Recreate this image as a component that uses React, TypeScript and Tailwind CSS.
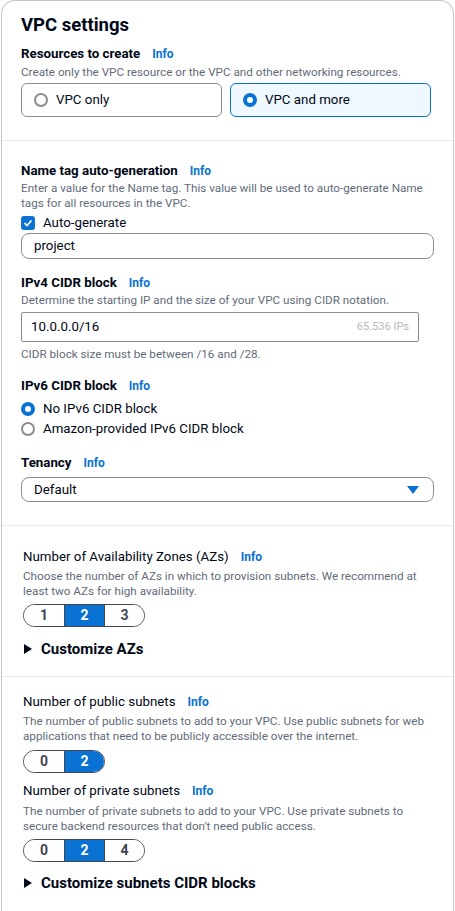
import React, { useState } from 'react';

const Info: React.FC = () => (
  <span className="ml-[12px] text-[12px] leading-none font-bold text-[#0972d3]">Info</span>
);

const Desc: React.FC<{ lines: string[]; className?: string }> = ({ lines, className = '' }) => (
  <div className={'text-[11.7px] leading-[15px] text-[#5f6b7a] ' + className}>
    {lines.map((l) => (
      <div key={l} className="whitespace-nowrap">
        {l}
      </div>
    ))}
  </div>
);

const Radio: React.FC<{ checked: boolean }> = ({ checked }) =>
  checked ? (
    <span className="inline-block w-[14px] h-[14px] rounded-full border-[4px] border-[#0972d3] bg-white shrink-0" />
  ) : (
    <span className="inline-block w-[14px] h-[14px] rounded-full border-[2px] border-[#8c8c94] bg-white shrink-0" />
  );

const Segmented: React.FC<{ options: string[]; selected: string }> = ({ options, selected }) => (
  <div className="inline-flex h-[23px] rounded-full border-[1.5px] border-[#424650] overflow-hidden">
    {options.map((o, i) => (
      <div
        key={o}
        className={
          'w-[40px] flex items-center justify-center text-[14px] font-bold ' +
          (i > 0 ? 'border-l-[1.5px] border-[#424650] ' : '') +
          (o === selected ? 'bg-[#0972d3] text-white' : 'bg-white text-[#424650]')
        }
      >
        {o}
      </div>
    ))}
  </div>
);

const Expander: React.FC<{ label: string }> = ({ label }) => (
  <div className="flex items-center h-[20px] text-[15px] font-bold text-[#000716]">
    <svg width="8" height="10" viewBox="0 0 8 10" className="ml-[1px] mr-[9px]">
      <path d="M0 0 L8 5 L0 10 Z" fill="#000716" />
    </svg>
    {label}
  </div>
);

export default function App() {
  const [resource, setResource] = useState('more');

  return (
    <div className="bg-white min-h-[911px]" style={{ fontFamily: 'Roboto, "Liberation Sans", Arial, sans-serif' }}>
      <div className="mx-[1px] border border-b-0 border-[#c6c6cd] rounded-t-[14px] min-h-[911px] text-[#000716]">
        {/* VPC settings */}
        <div className="px-[19px] pt-[12px] pb-[23px]">
          <h2 className="text-[18.5px] leading-[24px] font-bold">VPC settings</h2>
          <div className="mt-[7px] leading-[20px] text-[13.3px] font-bold">
            Resources to create<Info />
          </div>
          <Desc lines={['Create only the VPC resource or the VPC and other networking resources.']} className="leading-[16px]" />
          <div className="mt-[3px] flex gap-[8px] pr-[3px]">
            <button
              onClick={() => setResource('only')}
              className={
                'flex-1 h-[34px] flex items-center gap-[8px] px-[12px] rounded-[6px] border text-[13.3px] ' +
                (resource === 'only' ? 'border-[#0972d3] bg-[#f0f8ff]' : 'border-[#8c8c94] bg-white')
              }
            >
              <Radio checked={resource === 'only'} />
              VPC only
            </button>
            <button
              onClick={() => setResource('more')}
              className={
                'flex-1 h-[34px] flex items-center gap-[8px] px-[12px] rounded-[6px] border text-[13.3px] ' +
                (resource === 'more' ? 'border-[#0972d3] bg-[#f0f8ff]' : 'border-[#8c8c94] bg-white')
              }
            >
              <Radio checked={resource === 'more'} />
              VPC and more
            </button>
          </div>
        </div>

        <div className="h-[1px] bg-[#e9ebed]" />

        {/* Name tag, CIDR, tenancy */}
        <div className="px-[19px] pt-[20px] pb-[23px]">
          <div className="leading-[20px] text-[13.3px] font-bold">
            Name tag auto-generation<Info />
          </div>
          <Desc
            lines={[
              'Enter a value for the Name tag. This value will be used to auto-generate Name',
              'tags for all resources in the VPC.',
            ]}
          />
          <label className="mt-[2px] flex items-center gap-[8px] h-[20px] text-[13.3px]">
            <span className="w-[14px] h-[14px] rounded-[3px] bg-[#0972d3] flex items-center justify-center">
              <svg width="10" height="10" viewBox="0 0 10 10">
                <path d="M1.5 5.2 L4 7.5 L8.5 2.5" stroke="white" strokeWidth="1.8" fill="none" />
              </svg>
            </span>
            Auto-generate
          </label>
          <div className="h-[26px] flex items-center px-[12px] rounded-[8px] border border-[#8c8c94] text-[13.3px]">
            project
          </div>

          <div className="mt-[14px] leading-[20px] text-[13.3px] font-bold">
            IPv4 CIDR block<Info />
          </div>
          <Desc lines={['Determine the starting IP and the size of your VPC using CIDR notation.']} />
          <div className="mt-[4px] mr-[15px] h-[30px] flex items-center justify-between px-[9px] rounded-[2px] border border-[#8c8c94] text-[13.3px]">
            <span>10.0.0.0/16</span>
            <span className="text-[11px] text-[#b4b8be]">65.536 IPs</span>
          </div>
          <Desc lines={['CIDR block size must be between /16 and /28.']} className="mt-[4px] leading-[16px]" />

          <div className="mt-[14px] leading-[20px] text-[13.3px] font-bold">
            IPv6 CIDR block<Info />
          </div>
          <div className="mt-[3px] flex flex-col">
            <div className="flex items-center gap-[8px] h-[20px] text-[13.3px]">
              <Radio checked />
              No IPv6 CIDR block
            </div>
            <div className="flex items-center gap-[8px] h-[20px] text-[13.3px]">
              <Radio checked={false} />
              Amazon-provided IPv6 CIDR block
            </div>
          </div>

          <div className="mt-[14px] leading-[20px] text-[13.3px] font-bold">
            Tenancy<Info />
          </div>
          <div className="mt-[4px] h-[25px] flex items-center justify-between pl-[12px] pr-[14px] rounded-[8px] border border-[#8c8c94] text-[13.3px]">
            <span>Default</span>
            <svg width="12" height="8" viewBox="0 0 12 8">
              <path d="M0 0 H12 L6 8 Z" fill="#0972d3" />
            </svg>
          </div>
        </div>

        <div className="h-[1px] bg-[#e9ebed]" />

        {/* Availability zones */}
        <div className="pl-[21px] pr-[19px] pt-[21px] pb-[17px]">
          <div className="leading-[20px] text-[13.3px]">
            Number of Availability Zones (AZs)<Info />
          </div>
          <Desc
            className="mt-[2px]"
            lines={[
              'Choose the number of AZs in which to provision subnets. We recommend at',
              'least two AZs for high availability.',
            ]}
          />
          <div className="mt-[4px]">
            <Segmented options={['1', '2', '3']} selected="2" />
          </div>
          <div className="mt-[12px]">
            <Expander label="Customize AZs" />
          </div>
        </div>

        <div className="h-[1px] bg-[#e9ebed]" />

        {/* Subnets */}
        <div className="pl-[21px] pr-[19px] pt-[15px] pb-[17px]">
          <div className="leading-[20px] text-[13.3px]">
            Number of public subnets<Info />
          </div>
          <Desc
            className="mt-[2px]"
            lines={[
              'The number of public subnets to add to your VPC. Use public subnets for web',
              'applications that need to be publicly accessible over the internet.',
            ]}
          />
          <div className="mt-[5px]">
            <Segmented options={['0', '2']} selected="2" />
          </div>
          <div className="mt-[8px] leading-[20px] text-[13.3px]">
            Number of private subnets<Info />
          </div>
          <Desc
            className="mt-[3px]"
            lines={[
              'The number of private subnets to add to your VPC. Use private subnets to',
              "secure backend resources that don't need public access.",
            ]}
          />
          <div className="mt-[4px]">
            <Segmented options={['0', '2', '4']} selected="2" />
          </div>
          <div className="mt-[11px]">
            <Expander label="Customize subnets CIDR blocks" />
          </div>
        </div>
      </div>
    </div>
  );
}
